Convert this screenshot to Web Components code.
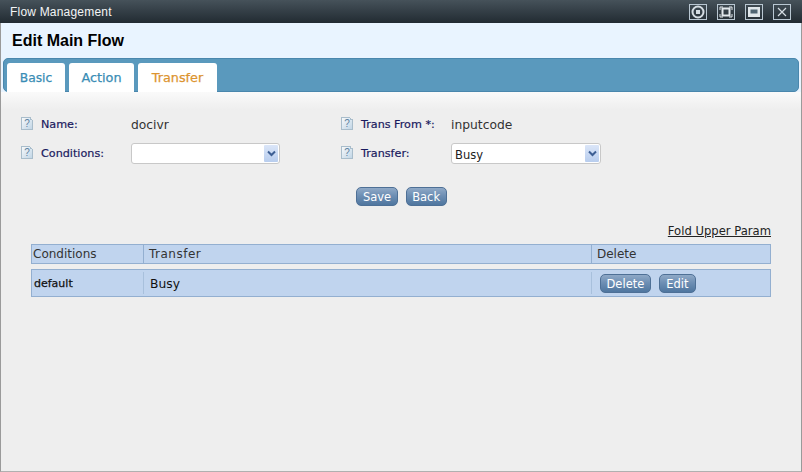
<!DOCTYPE html>
<html>
<head>
<meta charset="utf-8">
<style>
  html, body { margin: 0; padding: 0; height: 100%; overflow: hidden; background: #eee; }
</style>
</head>
<body>
<flow-window>
  <win-bar slot="bar" title="Flow Management"></win-bar>
  <page-head slot="head">Edit Main Flow</page-head>
  <tab-strip slot="tabs"></tab-strip>
  <flow-form></flow-form>
  <flow-table></flow-table>
</flow-window>

<script>
const FONT = `"DejaVu Sans", Verdana, sans-serif`;

class FlowWindow extends HTMLElement {
	constructor() {
		super();
		this.attachShadow({ mode: 'open' }).innerHTML = `
		<style>
		  :host { display: flex; flex-direction: column; width: 802px; height: 472px; box-sizing: border-box;
			border-left: 1px solid #9a9a9a; border-right: 1px solid #9a9a9a; border-bottom: 1px solid #b0b0b0;
			background: #eeeeee; font-family: ${FONT}; }
		  .tabs { padding: 0 2px; background: #e9f4ff; }
		  .body { flex: 1; background: linear-gradient(180deg, #fafafa 0, #eeeeee 18px); }
		</style>
		<slot name="bar"></slot>
		<slot name="head"></slot>
		<div class="tabs"><slot name="tabs"></slot></div>
		<div class="body"><slot></slot></div>`;
	}
}

class WinBar extends HTMLElement {
	constructor() {
		super();
		const title = this.getAttribute('title');
		this.removeAttribute('title');
		this.attachShadow({ mode: 'open' }).innerHTML = `
		<style>
		  :host { display: flex; align-items: center; justify-content: space-between; height: 23px; box-sizing: border-box;
			margin: 0 -1px; padding: 0 11px 0 10px; background: linear-gradient(180deg, #46525a 0, #37424a 40%, #222b32 100%);
			font: 12px "Liberation Sans", Arial, sans-serif; letter-spacing: .2px; color: #f2f4f5; }
		  .btns { display: flex; gap: 10px; }
		  svg { display: block; width: 18px; height: 16px; }
		</style>
		<span>${title}</span>
		<div class="btns">
		  <svg viewBox="0 0 18 16"><rect x=".5" y=".5" width="17" height="15" fill="none" stroke="#b9c7d2"/><circle cx="9" cy="8" r="5.5" fill="none" stroke="#d5dde3" stroke-width="2"/><rect x="7" y="6" width="4" height="4" fill="#d5dde3"/></svg>
		  <svg viewBox="0 0 18 16"><rect x=".5" y=".5" width="17" height="15" fill="none" stroke="#b9c7d2"/><rect x="5.5" y="4.5" width="7" height="7" fill="none" stroke="#e2e8ec" stroke-width="2"/><path d="M3 6V3h3M12 3h3v3M15 10v3h-3M6 13H3v-3" fill="none" stroke="#e2e8ec"/></svg>
		  <svg viewBox="0 0 18 16"><rect x=".5" y=".5" width="17" height="15" fill="none" stroke="#b9c7d2"/><rect x="3" y="3" width="12" height="10" fill="#dfe6ea"/><rect x="6" y="6" width="6" height="3" fill="#4f6472" stroke="#4f6472"/></svg>
		  <svg viewBox="0 0 18 16"><rect x=".5" y=".5" width="17" height="15" fill="none" stroke="#b9c7d2"/><path d="M5 4l8 8M13 4l-8 8" fill="none" stroke="#d5dde3" stroke-width="1.2"/></svg>
		</div>`;
	}
}

class PageHead extends HTMLElement {
	constructor() {
		super();
		this.attachShadow({ mode: 'open' }).innerHTML = `
		<style>
		  :host { display: flex; align-items: center; height: 35px; padding: 0 11px; box-sizing: border-box;
			background: #e9f4ff; font: bold 16px "Liberation Sans", Arial, sans-serif; color: #000; }
		</style>
		<slot></slot>`;
	}
}

class TabStrip extends HTMLElement {
	constructor() {
		super();
		this.attachShadow({ mode: 'open' }).innerHTML = `
		<style>
		  :host { display: flex; gap: 4px; height: 34px; box-sizing: border-box; padding: 4px 0 0 3px;
			background: #5a99bd; border: 1px solid #4a87ad; border-radius: 5px; align-items: stretch; }
		  .tab { display: flex; align-items: center; justify-content: center; background: #fff; border-radius: 3px 3px 0 0;
			font-size: 12.8px; -webkit-text-stroke: .25px currentColor; color: #3a8db5; height: 29px; }
		  .on { color: #dc9430; }
		</style>
		<div class="tab" style="width:58px;font-size:12.3px">Basic</div>
		<div class="tab" style="width:65px">Action</div>
		<div class="tab on" style="width:79px">Transfer</div>`;
	}
}

class HelpIcon extends HTMLElement {
	constructor() {
		super();
		this.attachShadow({ mode: 'open' }).innerHTML = `
		<style>
		  :host { display: block; position: relative; width: 12px; height: 13px; margin-top: -3px; box-sizing: border-box; border: 1px solid #a9bdcb;
			background: linear-gradient(135deg, #f6f9fb, #c2d6e6); font: 10px/11px "Liberation Sans", Arial, sans-serif;
			color: #5f82a0; text-align: center; }
		  /* folded corner */
		  i { position: absolute; top: -1px; right: -1px; width: 3px; height: 3px; background: linear-gradient(45deg, #a9bdcb 50%, #eee 50%); }
		</style>?<i></i>`;
	}
}

class FakeSelect extends HTMLElement {
	constructor() {
		super();
		const w = this.getAttribute('width');
		this.attachShadow({ mode: 'open' }).innerHTML = `
		<style>
		  :host { display: flex; width: ${w}px; height: 21px; box-sizing: border-box; border: 1px solid #c8c8c8; border-radius: 3px;
			background: #fff; font-size: 11.5px; color: #222; align-items: center; padding: 1px 1px 1px 3px; }
		  .v { flex: 1; padding-top: 2px; }
		  .a { width: 14px; height: 17px; background: linear-gradient(180deg, #dbe6f8, #b8cdee); border-radius: 1px; display: flex; align-items: center; justify-content: center; }
		  svg { width: 9px; height: 7px; display: block; }
		</style>
		<span class="v"><slot></slot></span>
		<span class="a"><svg viewBox="0 0 9 7"><path d="M1 1.5l3.5 3.5L8 1.5" fill="none" stroke="#3d5f94" stroke-width="2"/></svg></span>`;
	}
}

class GlossButton extends HTMLElement {
	constructor() {
		super();
		this.attachShadow({ mode: 'open' }).innerHTML = `
		<style>
		  :host { display: inline-flex; align-items: center; justify-content: center; height: 19px; box-sizing: border-box;
			padding: 1px 5.5px 0; border: 1px solid #4e7096; border-radius: 5px; background: linear-gradient(180deg, #8fa9c7 0, #6e8fb4 45%, #4f769f 100%);
			color: #fff; font-size: 11.5px; }
		</style>
		<slot></slot>`;
	}
}

class FlowForm extends HTMLElement {
	constructor() {
		super();
		this.attachShadow({ mode: 'open' }).innerHTML = `
		<style>
		  :host { display: block; padding: 22px 0 0 20px; font-size: 11px; }
		  .grid { display: grid; grid-template-columns: 20px 90px 210px 20px 90px 1fr; grid-template-rows: 21px 21px; row-gap: 8px; align-items: center; }
		  .l { color: #1a1a5e; font-size: 11.2px; -webkit-text-stroke: .2px currentColor; white-space: nowrap; }
		  .v { color: #333; font-size: 12.3px; }
		  .btns { display: flex; justify-content: center; gap: 8px; margin-top: 23px; padding-right: 19px; }
		</style>
		<div class="grid">
		  <help-icon></help-icon><span class="l">Name:</span><span class="v">docivr</span>
		  <help-icon></help-icon><span class="l">Trans From *:</span><span class="v">inputcode</span>
		  <help-icon></help-icon><span class="l">Conditions:</span><fake-select width="149"></fake-select>
		  <help-icon></help-icon><span class="l">Transfer:</span><fake-select width="150">Busy</fake-select>
		</div>
		<div class="btns"><gloss-button>Save</gloss-button><gloss-button>Back</gloss-button></div>`;
	}
}

class FlowTable extends HTMLElement {
	constructor() {
		super();
		this.attachShadow({ mode: 'open' }).innerHTML = `
		<style>
		  :host { display: block; padding: 17px 30px 0 30px; }
		  .fold { text-align: right; font-size: 11.6px; color: #222; text-decoration: underline; height: 21px; line-height: 17px; }
		  .row { display: grid; grid-template-columns: 111px 448px 1fr; box-sizing: border-box; background: #c0d4ee; border: 1px solid #93afd0; align-items: center; }
		  .hd { height: 20px; font-size: 12px; color: #333; }
		  .hd > div { height: 18px; line-height: 18px; border-left: 1px solid #93afd0; padding-left: 5px; }
		  .hd > div:first-child { border-left: 0; padding-left: 1px; }
		  .hd > div:nth-child(2) { letter-spacing: .5px; }
		  .bd { height: 28px; margin-top: 5px; font-size: 12.3px; color: #111; }
		  .bd > div { height: 22px; display: flex; align-items: center; gap: 8px; border-left: 1px solid #a8c0dc; padding-left: 6px; padding-top: 1px; box-sizing: border-box; }
		  .bd > div:first-child { border-left: 0; padding-left: 2px; font-size: 11px; -webkit-text-stroke: .25px currentColor; }
		  .bd > div:last-child { padding: 0 0 0 8px; }
		  .wide { padding: 1px 6.5px 0; }
		</style>
		<div class="fold">Fold Upper Param</div>
		<div class="row hd"><div>Conditions</div><div>Transfer</div><div>Delete</div></div>
		<div class="row bd"><div>default</div><div>Busy</div><div><gloss-button>Delete</gloss-button><gloss-button class="wide">Edit</gloss-button></div></div>`;
	}
}

customElements.define('flow-window', FlowWindow);
customElements.define('win-bar', WinBar);
customElements.define('page-head', PageHead);
customElements.define('tab-strip', TabStrip);
customElements.define('help-icon', HelpIcon);
customElements.define('fake-select', FakeSelect);
customElements.define('gloss-button', GlossButton);
customElements.define('flow-form', FlowForm);
customElements.define('flow-table', FlowTable);
</script>
</body>
</html>
